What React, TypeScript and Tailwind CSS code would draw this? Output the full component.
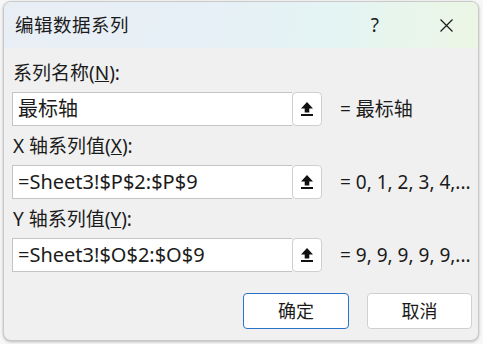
import React from 'react';

const FONT = '"Noto Sans", "Noto Sans CJK SC", sans-serif';

function BrowseIcon() {
  return (
    <svg width="14" height="16" viewBox="0 0 14 16">
      <path d="M7 1 L13 7.5 L9.3 7.5 L9.3 11.5 L4.7 11.5 L4.7 7.5 L1 7.5 Z" fill="#111" />
      <rect x="1" y="13" width="12" height="2" fill="#111" />
    </svg>
  );
}

interface RowProps {
  label: React.ReactNode;
  value: string;
  preview: string;
  className?: string;
}

function FieldRow({ label, value, preview, className }: RowProps) {
  return (
    <div className={className}>
      <div className="h-[24px] leading-[24px] pl-[1px] text-[19px] text-[#1b1b1b]">{label}</div>
      <div className="flex items-center mt-[7px]">
        <div className="flex w-[310px] h-[34px]">
          <div className="flex-1 flex items-center bg-white border border-r-0 border-[#c4c4c4] pl-[5px] text-[20px] text-[#1b1b1b] whitespace-nowrap overflow-hidden">
            {value}
          </div>
          <button className="w-[30px] h-[34px] flex items-center justify-center bg-white border border-[#cfcfcf] rounded-[4px]">
            <BrowseIcon />
          </button>
        </div>
        <span className="ml-[18px] text-[19px] text-[#1b1b1b] whitespace-nowrap">{preview}</span>
      </div>
    </div>
  );
}

export default function App() {
  return (
    <div className="w-[483px] h-[344px] bg-[#f7f7f7] overflow-hidden" style={{ fontFamily: FONT }}>
      <div className="ml-[3px] mt-[1px] w-[476px] h-[340px] rounded-[8px] border border-[#c9c9c9] bg-[#f0f0f0] shadow-[0_1px_3px_rgba(0,0,0,0.25)] overflow-hidden flex flex-col">
        {/* title bar */}
        <div className="h-[46px] shrink-0 flex items-center bg-[linear-gradient(100deg,#e9eef5_0%,#e6f0f6_45%,#e4f4f3_70%,#ecf6e4_100%)]">
          <span className="pl-[11px] text-[18.5px] text-[#1b1b1b] tracking-[0.5px]">编辑数据系列</span>
          <span className="ml-auto mr-[61px] text-[19px] text-[#1b1b1b]">?</span>
          <svg className="mr-[25px]" width="13" height="13" viewBox="0 0 13 13">
            <path d="M0.5 0.5 L12.5 12.5 M12.5 0.5 L0.5 12.5" stroke="#1b1b1b" strokeWidth="1.2" />
          </svg>
        </div>

        {/* body */}
        <div className="flex-1 flex flex-col pl-[8px] pt-[13px]">
          <FieldRow
            label={<>系列名称(<u>N</u>):</>}
            value="最标轴"
            preview="= 最标轴"
          />
          <FieldRow
            className="mt-[8px]"
            label={<>X 轴系列值(<u>X</u>):</>}
            value="=Sheet3!$P$2:$P$9"
            preview="= 0, 1, 2, 3, 4,..."
          />
          <FieldRow
            className="mt-[8px]"
            label={<>Y 轴系列值(<u>Y</u>):</>}
            value="=Sheet3!$O$2:$O$9"
            preview="= 9, 9, 9, 9, 9,..."
          />

          <div className="flex justify-end gap-[18px] pr-[6px] mt-[21px]">
            <button className="w-[106px] h-[36px] bg-white border border-[#2a73c8] rounded-[4px] text-[18px] text-[#1b1b1b]">
              确定
            </button>
            <button className="w-[105px] h-[36px] bg-white border border-[#d0d0d0] rounded-[4px] text-[18px] text-[#1b1b1b]">
              取消
            </button>
          </div>
        </div>
      </div>
    </div>
  );
}
